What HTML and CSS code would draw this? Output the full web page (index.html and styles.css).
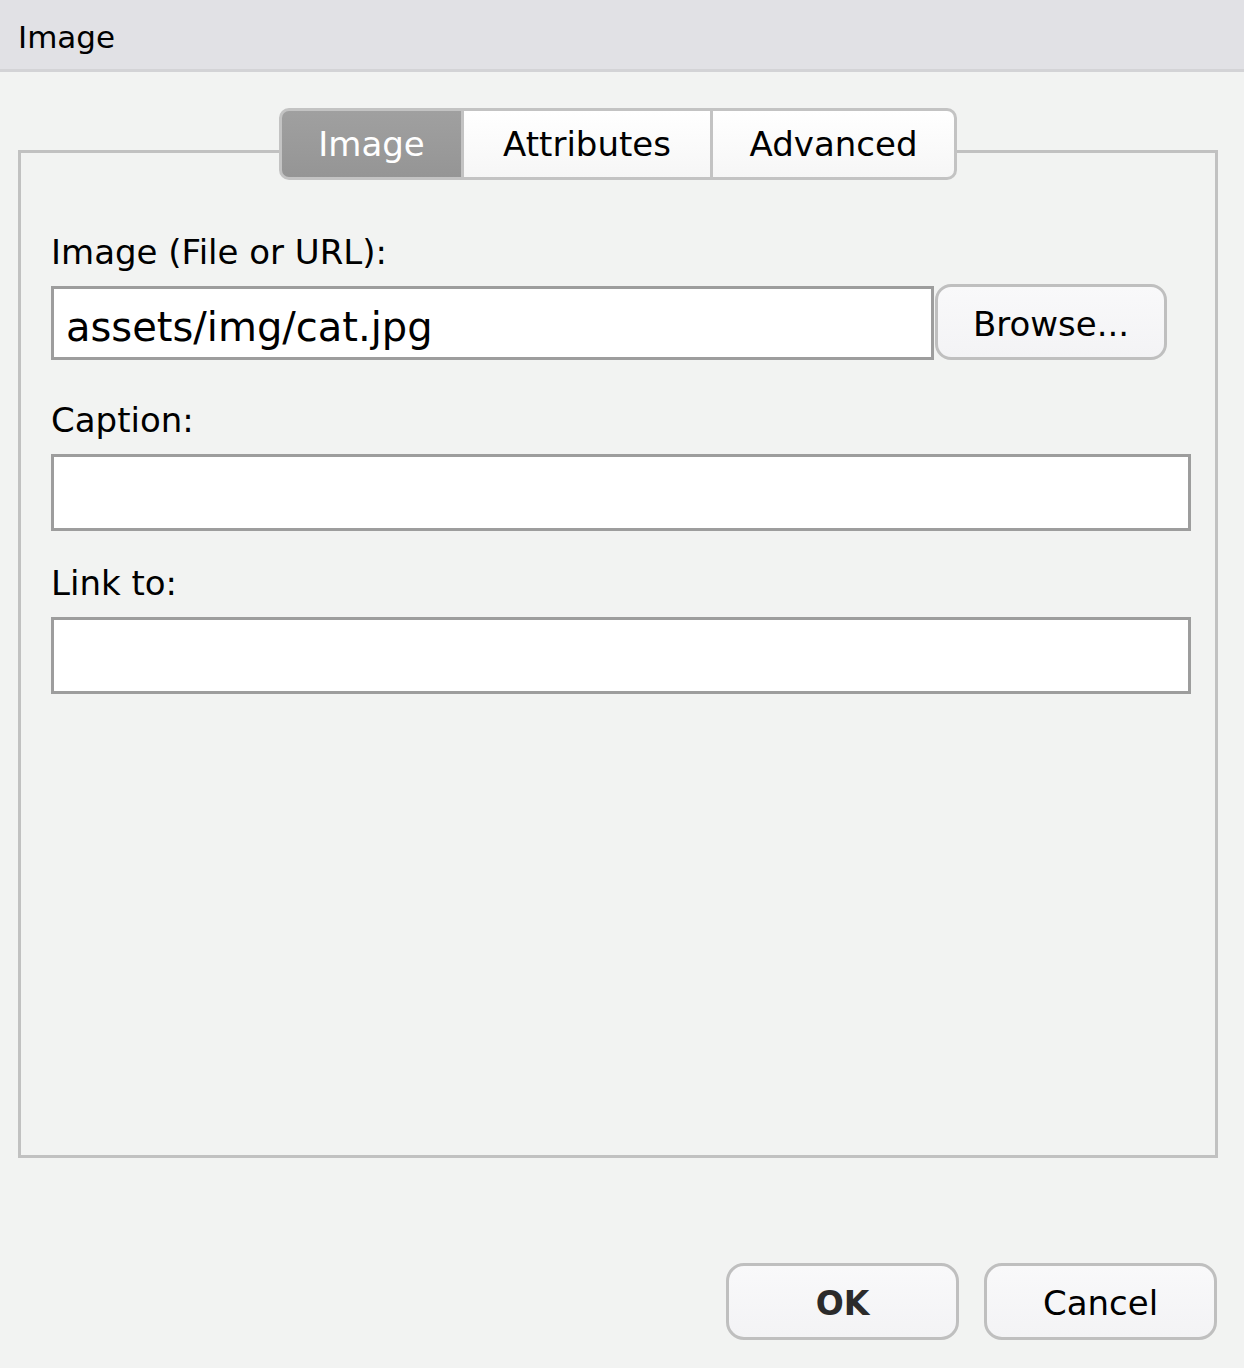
FILE: index.html
```html
<!DOCTYPE html>
<html lang="en">
<head>
<meta charset="utf-8">
<title>Image</title>
<link rel="stylesheet" href="styles.css">
</head>
<body>
<div class="titlebar">Image</div>
<div class="dialog">
  <div class="tabs-row">
    <div class="tabs">
      <div class="tab tab-image active">Image</div>
      <div class="tab tab-attr">Attributes</div>
      <div class="tab tab-adv">Advanced</div>
    </div>
  </div>
  <div class="panel">
    <label class="label">Image (File or URL):</label>
    <div class="file-row">
      <input class="field field-file" type="text" value="assets/img/cat.jpg">
      <button class="btn btn-browse">Browse...</button>
    </div>
    <label class="label label-caption">Caption:</label>
    <input class="field field-wide" type="text">
    <label class="label label-link">Link to:</label>
    <input class="field field-wide" type="text">
  </div>
  <div class="actions">
    <button class="btn btn-dialog btn-ok">OK</button>
    <button class="btn btn-dialog">Cancel</button>
  </div>
</div>
</body>
</html>
```

FILE: styles.css
```css
html, body {
  margin: 0;
  padding: 0;
}
body {
  width: 1244px;
  height: 1368px;
  background: #f2f3f2;
  font-family: "DejaVu Sans", "Liberation Sans", sans-serif;
  color: #000;
  overflow: hidden;
}
.titlebar {
  box-sizing: border-box;
  height: 72px;
  padding: 5px 0 0 18px;
  font-size: 31px;
  line-height: 64px;
  background: #e1e1e5;
  border-bottom: 3px solid #d3d3d6;
}
.dialog {
  display: flex;
  flex-direction: column;
}
.tabs-row {
  position: relative;
  z-index: 1;
  margin: 36px 0 -30px 279px;
  display: flex;
}
.tabs {
  display: flex;
  border: 3px solid #c3c3c3;
  border-radius: 10px;
  overflow: hidden;
  background: #c3c3c3;
  gap: 3px;
}
.tab {
  height: 66px;
  line-height: 66px;
  font-size: 34px;
  text-align: center;
  background: linear-gradient(#ffffff, #f6f6f6);
}
.tab-image { width: 179px; }
.tab-attr { width: 246px; }
.tab-adv { width: 241px; }
.tab.active {
  color: #fff;
  background: linear-gradient(#a0a0a0, #959595);
}
.panel {
  box-sizing: border-box;
  margin-left: 18px;
  width: 1200px;
  height: 1008px;
  border: 3px solid #c1c1c1;
  padding: 79px 0 0 30px;
}
.label {
  display: block;
  font-size: 34px;
  line-height: 40px;
}
.file-row {
  margin-top: 12px;
  display: flex;
  align-items: flex-end;
  height: 76px;
}
.field {
  display: block;
  box-sizing: border-box;
  margin: 0;
  border: 3px solid #9d9d9d;
  border-radius: 0;
  background: #fff;
  outline: none;
  font-family: "DejaVu Sans", "Liberation Sans", sans-serif;
  color: #000;
}
.field-file {
  width: 883px;
  height: 74px;
  padding: 8px 12px 0 12px;
  font-size: 40px;
}
.field-wide {
  width: 1140px;
  height: 77px;
  margin-top: 14px;
  padding: 0 12px;
  font-size: 34px;
}
.label-caption { margin-top: 40px; }
.label-link { margin-top: 32px; }
.btn {
  box-sizing: border-box;
  margin: 0;
  font-family: "DejaVu Sans", "Liberation Sans", sans-serif;
  color: #000;
  border: 3px solid #bfbfbf;
  background: linear-gradient(#f9f9fa, #f3f3f5);
  padding: 0;
  cursor: default;
}
.btn-browse {
  margin-left: 1px;
  width: 232px;
  height: 76px;
  border-radius: 16px;
  font-size: 34px;
  padding-top: 3px;
}
.actions {
  margin-top: 105px;
  padding-right: 27px;
  display: flex;
  justify-content: flex-end;
  gap: 25px;
}
.btn-dialog {
  width: 233px;
  height: 77px;
  border-radius: 18px;
  font-size: 34px;
  padding-top: 3px;
}
.btn-ok {
  font-weight: bold;
  font-size: 33px;
  color: #2b2b2b;
}
```
